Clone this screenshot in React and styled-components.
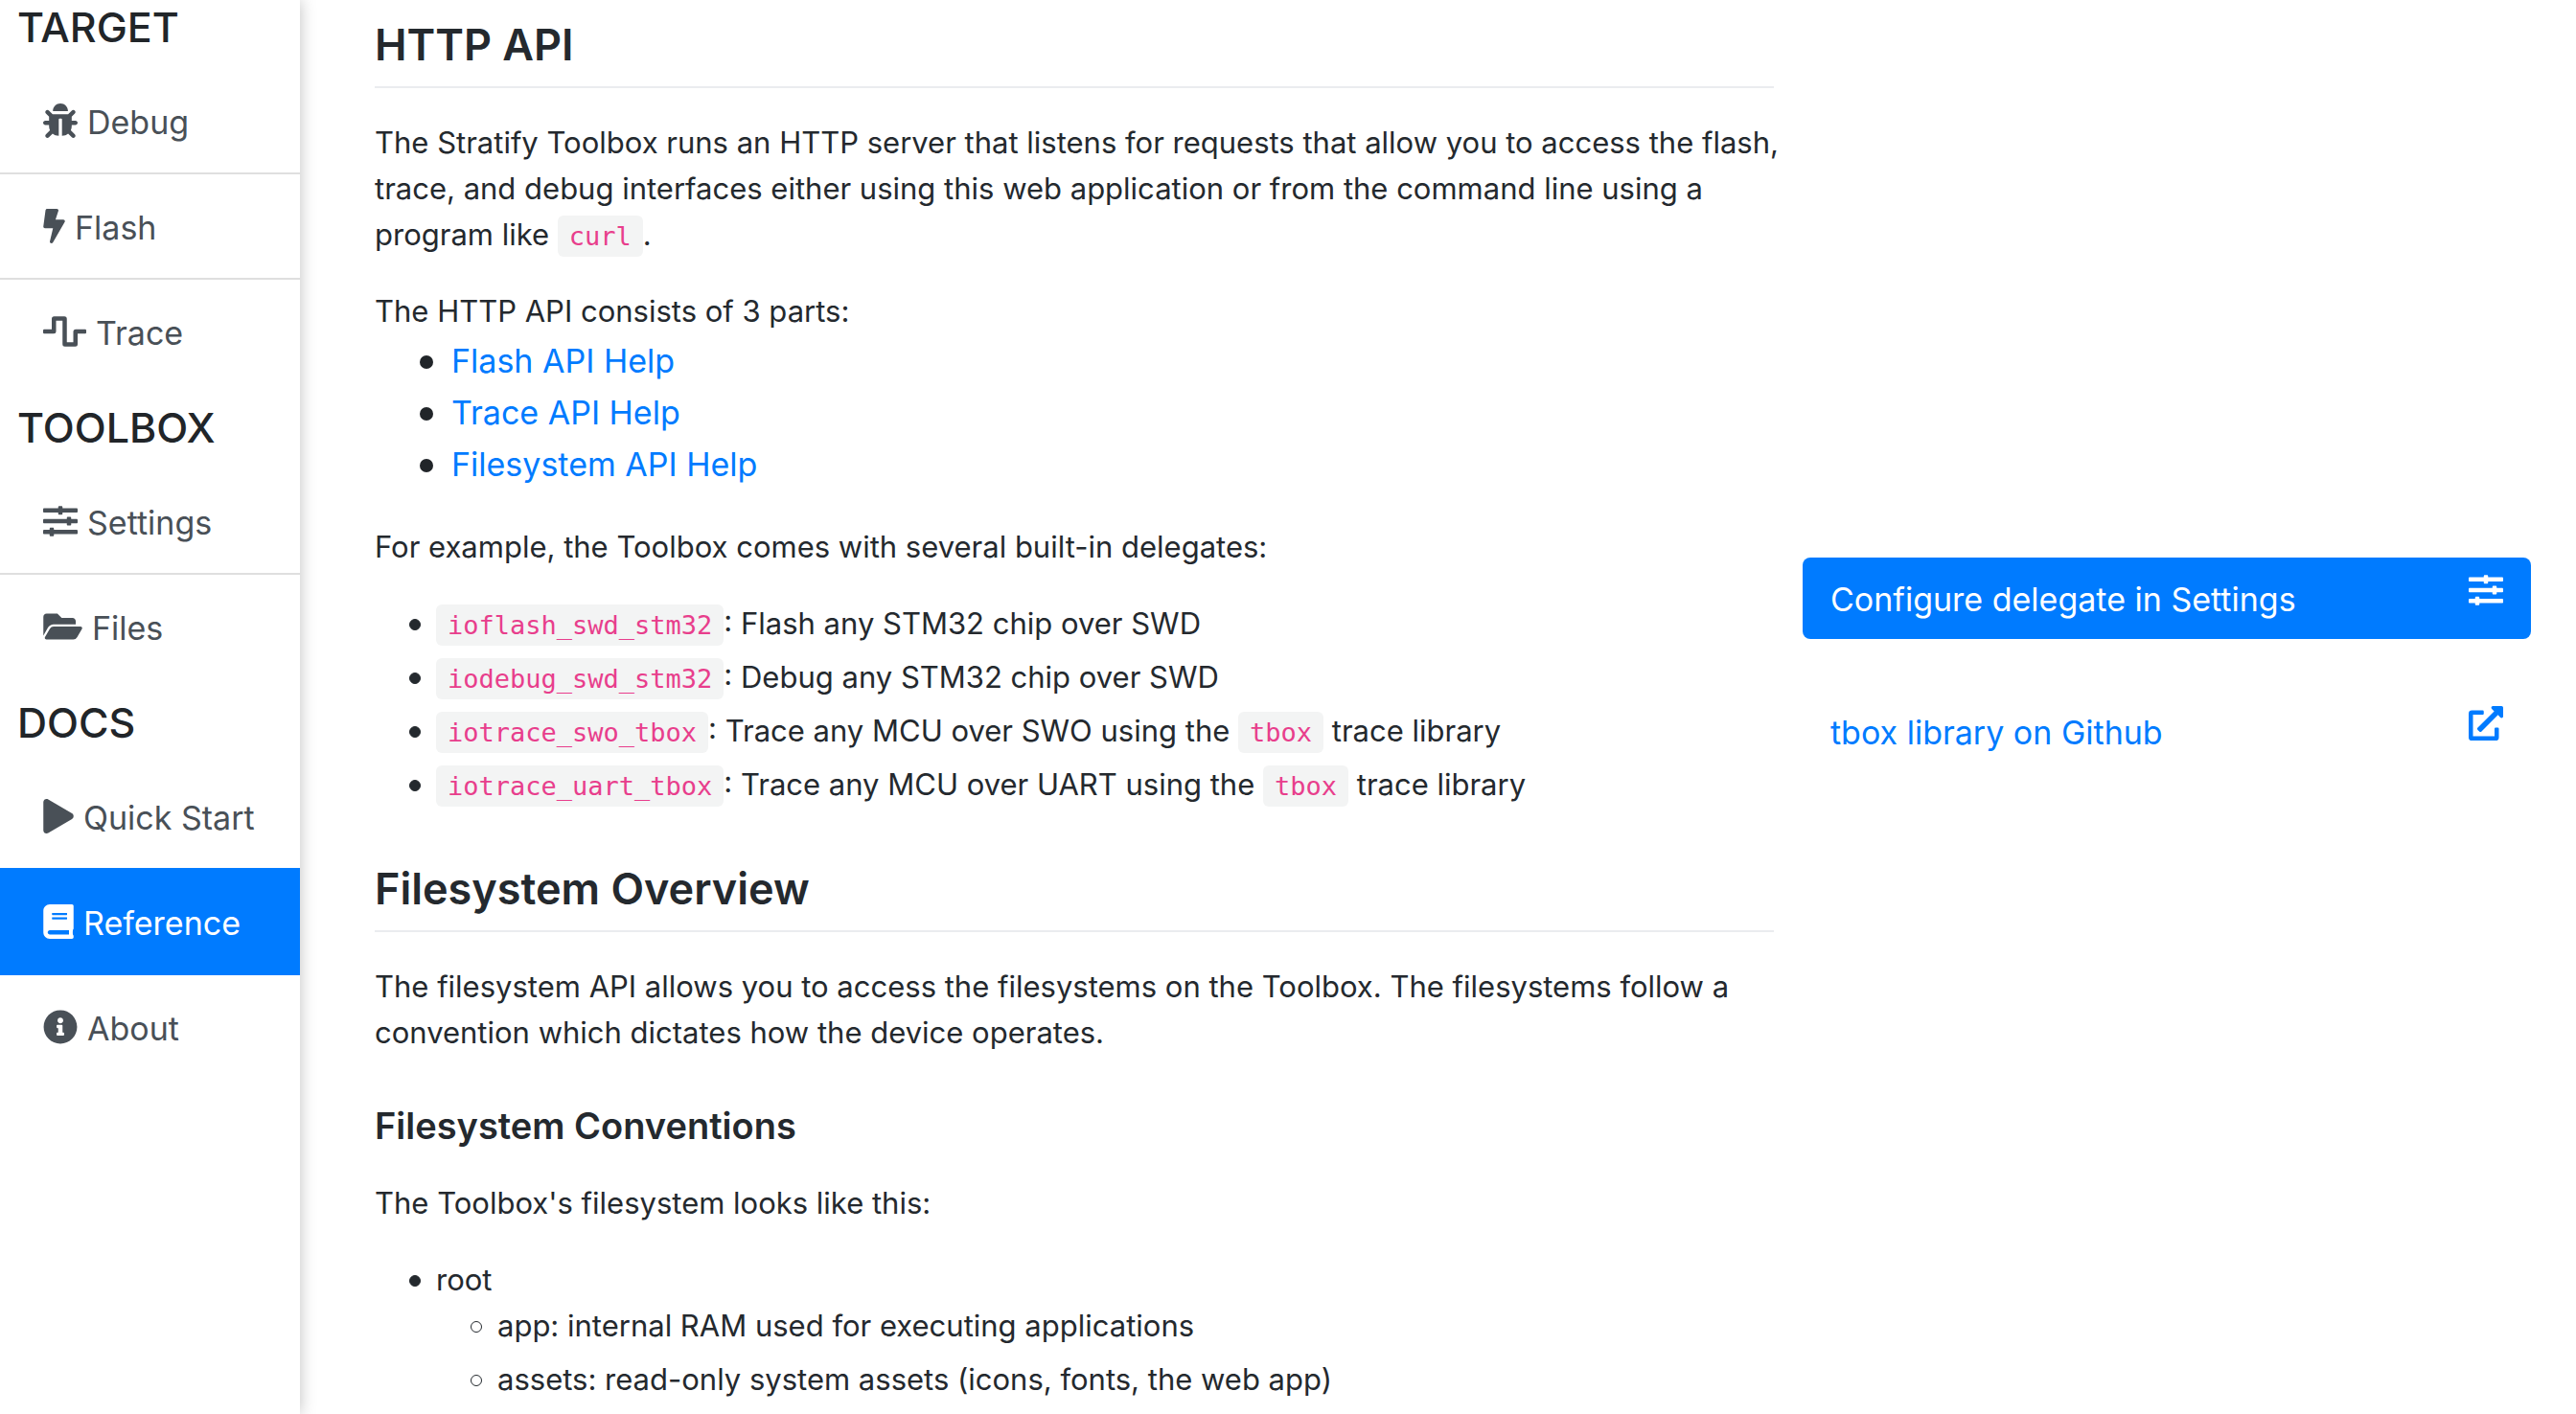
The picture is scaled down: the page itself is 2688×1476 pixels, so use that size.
import React from "react";
import styled, { createGlobalStyle, css } from "styled-components";
import {
  FaBolt,
  FaBook,
  FaBug,
  FaExternalLinkAlt,
  FaFolderOpen,
  FaInfoCircle,
  FaPlay,
  FaSlidersH,
  FaWaveSquare,
} from "react-icons/fa";

const GlobalStyle = createGlobalStyle`
  *, *::before, *::after { box-sizing: border-box; }
  html { overflow: hidden; }
  body {
    margin: 0;
    background: #fff;
    color: #212529;
    font-family: Inter, "Liberation Sans", sans-serif;
    font-size: 34px;
    line-height: 54px;
  }
`;

const Page = styled.div`
  display: flex;
  align-items: stretch;
  height: 100vh;
  overflow: hidden;
`;

const Sidebar = styled.nav`
  flex: 0 0 313px;
  min-width: 0;
  background: #fff;
  box-shadow: 0 0 16px rgba(0, 0, 0, 0.25);
`;

const NavTitle = styled.h4`
  margin: 0;
  padding: 16px 18px;
  font-size: 43px;
  font-weight: 500;
  line-height: 56px;

  &:first-child {
    padding-top: 0;
  }
`;

const NavList = styled.ul`
  margin: 0;
  padding: 0;
  list-style: none;
`;

const NavItem = styled.li`
  border-bottom: 2px solid #dfdfdf;

  &:last-child {
    border-bottom-color: transparent;
  }
`;

const NavLink = styled.a`
  display: flex;
  align-items: center;
  gap: 10px;
  height: 108px;
  padding: 0 16px 0 45px;
  color: #495057;
  text-decoration: none;
  white-space: nowrap;

  ${({ $active }) =>
    $active &&
    css`
      color: #fff;
      background: #007bff;
      box-shadow: 0 -2px 0 #007bff, 0 2px 0 #007bff;
    `}
`;

const NavLabel = styled.span`
  padding-top: 3px;
`;

const NavIcon = styled.span`
  display: flex;
  flex: none;
  width: ${({ $width }) => $width}px;

  svg {
    width: 100%;
    height: 36px;
  }
`;

const Main = styled.main`
  flex: 1;
  min-width: 0;
  padding: 14px 47px 0 48px;
`;

const Row = styled.section`
  display: grid;
  grid-template-columns: minmax(0, 2fr) minmax(0, 1fr);
`;

const Prose = styled.div`
  padding: 0 30px;
  color: #24292e;
  font-size: 31px;
  line-height: 48px;

  h2 {
    margin: 0 0 33px;
    padding-bottom: 10px;
    border-bottom: 2px solid #eaecef;
    font-size: 45px;
    font-weight: 600;
    line-height: 66px;
  }

  h3 {
    margin: 48px 0 32px;
    font-size: 38px;
    font-weight: 600;
    line-height: 50px;
  }

  p {
    margin: 0 -16px 32px 0;
  }
`;

const LinkList = styled.ul`
  margin: -31px 0 35px;
  padding-left: 80px;
  color: #212529;
  font-size: 34px;
  line-height: 54px;
  list-style: none;

  li::before {
    content: "";
    display: inline-block;
    width: 14px;
    height: 14px;
    margin: 0 19px 0 -33px;
    border-radius: 50%;
    background: currentColor;
    vertical-align: 4px;
  }
`;

const TextLink = styled.a`
  color: #007bff;
  text-decoration: none;
`;

const BulletList = styled.ul`
  margin: 0 0 52px;
  padding-left: 64px;
  list-style: none;

  li + li {
    margin-top: 8px;
  }

  li::before {
    content: "";
    display: inline-block;
    width: 12px;
    height: 12px;
    margin: 0 16px 0 -28px;
    border: 1px solid currentColor;
    border-radius: 50%;
    background: currentColor;
    vertical-align: 4px;
  }

  & & {
    margin: 0;
  }

  & & li::before {
    background: transparent;
  }
`;

const Code = styled.code`
  padding: 6px 12px;
  border-radius: 6px;
  background: #f3f4f4;
  color: #e83e8c;
  font-family: "DejaVu Sans Mono", "Liberation Mono", monospace;
  font-size: 27px;
  line-height: 32px;
`;

const Actions = styled.aside`
  display: flex;
  flex-direction: column;
  gap: 54px;
  padding-top: 35px;
`;

const Action = styled.a`
  display: flex;
  align-items: flex-start;
  justify-content: space-between;
  padding: 16px 29px 14px;
  border-radius: 8px;
  color: ${({ $primary }) => ($primary ? "#fff" : "#007bff")};
  background: ${({ $primary }) => ($primary ? "#007bff" : "transparent")};
  line-height: 55px;
  text-decoration: none;

  svg {
    flex: none;
    width: 36px;
    height: 36px;
  }
`;

const sections = [
  {
    title: "TARGET",
    items: [
      { label: "Debug", Icon: FaBug, width: 36 },
      { label: "Flash", Icon: FaBolt, width: 23 },
      { label: "Trace", Icon: FaWaveSquare, width: 45 },
    ],
  },
  {
    title: "TOOLBOX",
    items: [
      { label: "Settings", Icon: FaSlidersH, width: 36 },
      { label: "Files", Icon: FaFolderOpen, width: 41 },
    ],
  },
  {
    title: "DOCS",
    items: [
      { label: "Quick Start", Icon: FaPlay, width: 32 },
      { label: "Reference", Icon: FaBook, width: 32, active: true },
      { label: "About", Icon: FaInfoCircle, width: 36 },
    ],
  },
];

export default function App() {
  return (
    <>
      <GlobalStyle />
      <Page>
        <Sidebar>
          {sections.map(({ title, items }) => (
            <React.Fragment key={title}>
              <NavTitle>{title}</NavTitle>
              <NavList>
                {items.map(({ label, Icon, width, active }) => (
                  <NavItem key={label}>
                    <NavLink href="#" $active={active} aria-current={active ? "page" : undefined}>
                      <NavIcon $width={width} aria-hidden="true">
                        <Icon />
                      </NavIcon>
                      <NavLabel>{label}</NavLabel>
                    </NavLink>
                  </NavItem>
                ))}
              </NavList>
            </React.Fragment>
          ))}
        </Sidebar>
        <Main>
          <Row>
            <Prose>
              <h2>HTTP API</h2>
              <p>
                The Stratify Toolbox runs an HTTP server that listens for requests that allow you to
                access the flash, trace, and debug interfaces either using this web application or
                from the command line using a program like <Code>curl</Code>.
              </p>
              <p>The HTTP API consists of 3 parts:</p>
              <LinkList>
                <li><TextLink href="#">Flash API Help</TextLink></li>
                <li><TextLink href="#">Trace API Help</TextLink></li>
                <li><TextLink href="#">Filesystem API Help</TextLink></li>
              </LinkList>
            </Prose>
          </Row>
          <Row>
            <Prose>
              <p>For example, the Toolbox comes with several built-in delegates:</p>
              <BulletList>
                <li><Code>ioflash_swd_stm32</Code>: Flash any STM32 chip over SWD</li>
                <li><Code>iodebug_swd_stm32</Code>: Debug any STM32 chip over SWD</li>
                <li>
                  <Code>iotrace_swo_tbox</Code>: Trace any MCU over SWO using the{" "}
                  <Code>tbox</Code> trace library
                </li>
                <li>
                  <Code>iotrace_uart_tbox</Code>: Trace any MCU over UART using the{" "}
                  <Code>tbox</Code> trace library
                </li>
              </BulletList>
            </Prose>
            <Actions>
              <Action href="#" $primary>
                Configure delegate in Settings
                <FaSlidersH aria-hidden="true" />
              </Action>
              <Action href="#">
                tbox library on Github
                <FaExternalLinkAlt aria-hidden="true" />
              </Action>
            </Actions>
          </Row>
          <Row>
            <Prose>
              <h2>Filesystem Overview</h2>
              <p>
                The filesystem API allows you to access the filesystems on the Toolbox. The
                filesystems follow a convention which dictates how the device operates.
              </p>
              <h3>Filesystem Conventions</h3>
              <p>The Toolbox's filesystem looks like this:</p>
              <BulletList>
                <li>
                  root
                  <BulletList>
                    <li>app: internal RAM used for executing applications</li>
                    <li>assets: read-only system assets (icons, fonts, the web app)</li>
                  </BulletList>
                </li>
              </BulletList>
            </Prose>
          </Row>
        </Main>
      </Page>
    </>
  );
}
